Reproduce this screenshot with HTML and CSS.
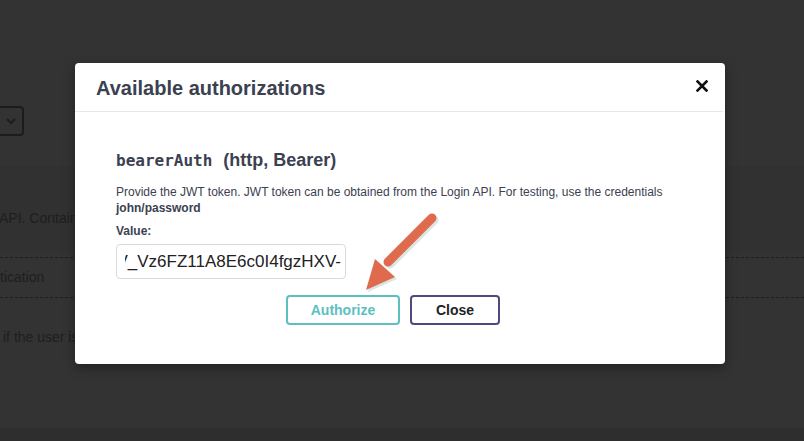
FILE: index.html
```html
<!DOCTYPE html>
<html>
<head>
<meta charset="utf-8">
<link rel="stylesheet" href="styles.css">
</head>
<body>
<div class="page">
  <div class="select-row">
    <div class="select">
      <svg class="chev" width="10" height="7" viewBox="0 0 10 7"><path d="M1 1l4 4 4-4" fill="none" stroke="#1c1c1c" stroke-width="2"/></svg>
    </div>
  </div>
  <div class="info-block">
    <p class="info-text">API. Contains endpoints for user registration and authentication</p>
  </div>
  <div class="table">
    <div class="table-row">tication</div>
  </div>
  <p class="row-desc">if the user is authenticated</p>
  <div class="bottom-band"></div>
</div>

<div class="modal">
  <div class="modal-header">
    <h3 class="modal-title">Available authorizations</h3>
    <svg class="close-x" width="12" height="12" viewBox="0 0 12 12"><path d="M1.5 1.5l9 9M10.5 1.5l-9 9" stroke="#111" stroke-width="2.6" stroke-linecap="square"/></svg>
  </div>
  <div class="modal-body">
    <h4 class="scheme"><code class="scheme-name">bearerAuth</code><span>(http, Bearer)</span></h4>
    <p class="desc">Provide the JWT token. JWT token can be obtained from the Login API. For testing, use the credentials <strong>john/password</strong></p>
    <label class="value-label">Value:</label>
    <div class="input">
      <div class="input-clip"><span>eyJhbGciOiJIUzI1NiJ9.V_Vz6FZ11A8E6c0I4fgzHXV-</span></div>
    </div>
    <div class="actions">
      <button class="btn btn-auth">Authorize</button>
      <button class="btn btn-close">Close</button>
    </div>
  </div>
</div>

<svg class="arrow" width="90" height="90" viewBox="0 0 90 90">
  <g transform="translate(2,2)">
    <path d="M72 6 L28 50" stroke="#d9e6e2" stroke-width="9" stroke-linecap="round"/>
    <polygon points="15,47 35,65 6,78" fill="#d9e6e2"/>
  </g>
  <path d="M72 6 L28 50" stroke="#e06a4e" stroke-width="9" stroke-linecap="round"/>
  <polygon points="15,47 35,65 6,78" fill="#e06a4e"/>
</svg>
</body>
</html>
```

FILE: styles.css
```css
* { box-sizing: border-box; }

html, body {
  margin: 0;
  padding: 0;
}

body {
  width: 804px;
  height: 441px;
  overflow: hidden;
  position: relative;
  background: #333333;
  font-family: "Liberation Sans", Arial, sans-serif;
}

.page {
  display: flex;
  flex-direction: column;
  height: 441px;
}

.select-row {
  padding-top: 106px;
  height: 166px;
}

.select {
  width: 64px;
  height: 30px;
  margin-left: -40px;
  border: 2px solid #1c1c1c;
  border-radius: 4px;
  display: flex;
  align-items: center;
  padding-left: 44px;
}

.info-block {
  height: 87px;
  display: flex;
  align-items: flex-start;
  background: #313131;
}

.info-text {
  margin: 44px 0 0 -1px;
  font-size: 14px;
  color: #1e1e1e;
  white-space: nowrap;
}

.table {
  margin-top: 4px;
  border-top: 1px dashed #1e1e1e;
  border-bottom: 1px dashed #1e1e1e;
  height: 41px;
}

.table-row {
  margin-left: 0;
  line-height: 39px;
  font-size: 14px;
  color: #1e1e1e;
}

.row-desc {
  margin: 29px 0 0 3px;
  font-size: 14px;
  line-height: 20px;
  color: #1e1e1e;
  white-space: nowrap;
}

.bottom-band {
  margin-top: auto;
  height: 13px;
  background: #2e2e2e;
}

.modal {
  position: absolute;
  left: 75px;
  top: 63px;
  width: 650px;
  height: 301px;
  background: #ffffff;
  border-radius: 4px;
  box-shadow: 0 4px 12px rgba(0, 0, 0, 0.35);
  color: #3b4151;
}

.modal-header {
  height: 49px;
  border-bottom: 1px solid #e5e8e5;
  display: flex;
  align-items: center;
  justify-content: space-between;
  padding: 0 15px 0 21px;
  margin-right: 2px;
}

.modal-title {
  margin: 0;
  font-size: 20px;
  font-weight: bold;
  color: #3b4151;
  line-height: 24px;
  padding-top: 2px;
}

.close-x {
  margin-top: -3px;
}

.modal-body {
  padding: 36px 20px 0 41px;
}

.scheme {
  margin: 0;
  font-size: 18px;
  line-height: 24px;
  font-weight: bold;
  color: #3b4151;
}

.scheme-name {
  font-family: "DejaVu Sans Mono", monospace;
  font-size: 16px;
  font-weight: bold;
  margin-right: 11px;
}

.desc {
  margin: 11px 0 0;
  font-size: 12px;
  line-height: 16px;
  color: #3b4151;
}

.desc strong {
  font-weight: bold;
}

.value-label {
  display: block;
  margin-top: 7px;
  font-size: 12px;
  line-height: 16px;
  font-weight: bold;
  color: #3b4151;
}

.input {
  margin-top: 5px;
  width: 230px;
  height: 35px;
  border: 1px solid #d9d9d9;
  border-radius: 4px;
  padding: 0 4px 0 8px;
  display: flex;
  align-items: center;
}

.input-clip {
  flex: 1;
  overflow: hidden;
  display: flex;
  justify-content: flex-end;
  white-space: nowrap;
  font-size: 17px;
  color: #222222;
}

.actions {
  display: flex;
  gap: 10px;
  margin-top: 16px;
  padding-left: 170px;
}

.btn {
  height: 30px;
  border-radius: 4px;
  background: #ffffff;
  font-family: "Liberation Sans", Arial, sans-serif;
  font-size: 14px;
  font-weight: bold;
  padding: 0;
}

.btn-auth {
  width: 114px;
  border: 2px solid #5cbfc2;
  color: #5cbfc2;
}

.btn-close {
  width: 90px;
  border: 2px solid #4f4a7c;
  color: #222222;
}

.arrow {
  position: absolute;
  left: 360px;
  top: 212px;
}
```
